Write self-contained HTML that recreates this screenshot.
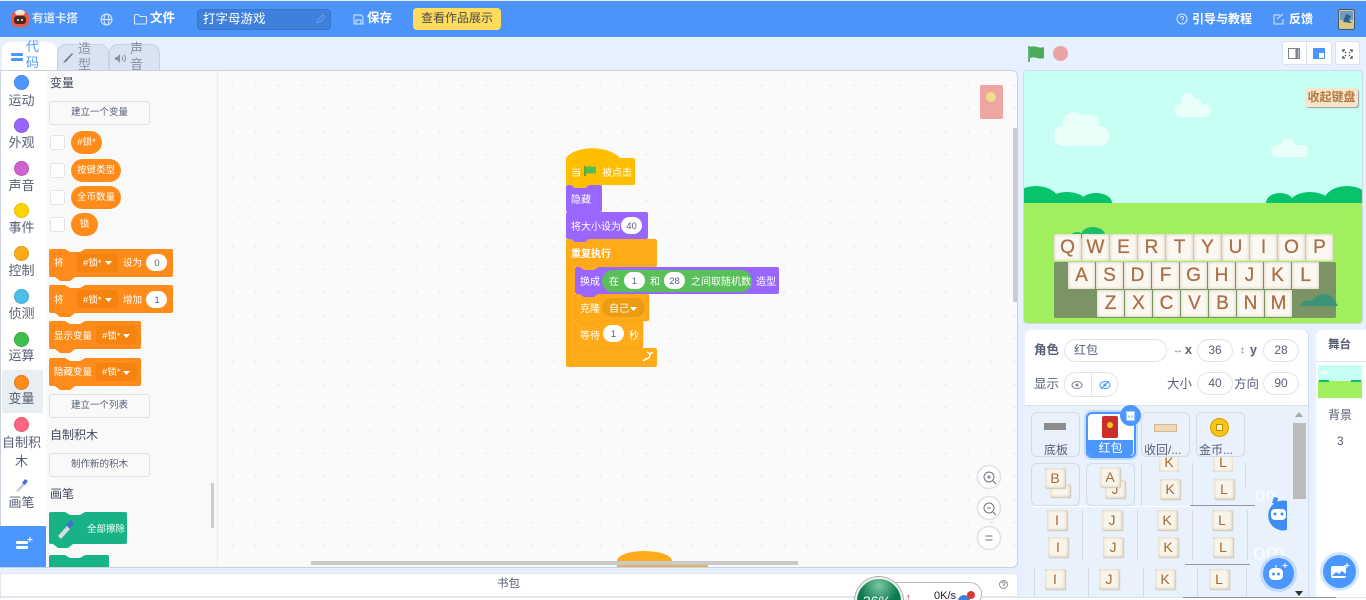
<!DOCTYPE html>
<html><head><meta charset="utf-8">
<style>
html,body{margin:0;padding:0;width:1366px;height:600px;overflow:hidden;background:#e6f0ff;font-family:"Liberation Sans","Noto Sans CJK SC",sans-serif;color:#575e75}
#w{position:relative;width:1366px;height:600px;overflow:hidden;background:#e6f0ff}
.a{position:absolute}
.t{position:absolute;white-space:nowrap;line-height:1}
.c{position:absolute;width:15px;height:15px;box-sizing:border-box;border-radius:50%;border:.5px solid rgba(0,0,0,.12)}
.l{position:absolute;left:0;width:43px;text-align:center;font-size:13px;line-height:16px;color:#575e75}
.btn{position:absolute;left:49px;width:99px;height:22px;border:1px solid #dde1e6;border-radius:3px;background:#f9f9f9;text-align:center;font-size:9.500px;line-height:22px;color:#575e75}
.h{position:absolute;left:50px;font-size:12px;color:#454b5c;line-height:14px}
.cb{position:absolute;left:50px;width:13px;height:13px;background:#fff;border:1px solid #e0e3e8;border-radius:3px}
.pill{position:absolute;left:71px;height:23px;border-radius:12px;background:#ff8c1a;color:#fff;font-size:9.500px;line-height:23px;text-align:center}
.f{position:absolute;height:21px;border:1px solid #dfe3ea;border-radius:12px;background:#fff;text-align:center;font-size:12px;line-height:21px;color:#575e75}
.tile{position:absolute;width:47px;height:43px;border:1px solid #d3dbe8;border-radius:6px;background:#e9f1fc}
.key{position:absolute;width:27px;height:27px;background:#fbf8f1;box-shadow:inset 0 0 3px #cfc2a8;text-align:center;font-size:19px;line-height:27px;color:#a9704a;-webkit-text-stroke:.3px #a9704a}
.k2{position:absolute;width:20px;height:20px;background:#f9f5ea;box-shadow:inset 0 0 3px #cfc2a8,1px 1px 1px #cfc6b2;text-align:center;font-size:14px;line-height:20px;color:#a46a3a}
</style></head><body><div id="w">

<!-- top bar -->
<div class="a" style="left:0;top:1px;width:1366px;height:36px;background:#4c94f9"></div>
<svg class="a" style="left:10px;top:9px" width="20" height="19"><path d="M6 3c-4 0-5 3-5 7s2 8 5 8h8c3 0 5-4 5-8s-1-7-5-7z" fill="#ef5a44"/><path d="M5 3c2-3 8-3 10 0l-1 3H6z" fill="#fbe3d8"/><rect x="4" y="7" width="12" height="8" rx="3" fill="#4c2620"/><circle cx="8" cy="11" r="1" fill="#fff"/><circle cx="12" cy="11" r="1" fill="#fff"/></svg>
<div class="t" style="left:32px;top:14px;font-size:11.500px;color:#dceaff;font-weight:bold">有道卡搭</div>
<svg class="a" style="left:100px;top:13px" width="13" height="13" fill="none" stroke="#d8e8ff"><circle cx="6.500" cy="6.500" r="5.500"/><ellipse cx="6.500" cy="6.500" rx="2.500" ry="5.500"/><path d="M1 6.500h11"/></svg>
<svg class="a" style="left:134px;top:13px" width="13" height="12" fill="none" stroke="#d8e8ff"><path d="M.5 2.500a1 1 0 0 1 1-1h3l1.500 2h5.500a1 1 0 0 1 1 1v5.500a1 1 0 0 1-1 1h-10a1 1 0 0 1-1-1z"/></svg>
<div class="t" style="left:150px;top:12px;font-size:12.500px;color:#fff;font-weight:bold">文件</div>
<div class="a" style="left:197px;top:9px;width:132px;height:19px;background:#3f80dc;border:1px solid #3775cf;border-radius:4px"></div>
<div class="t" style="left:203px;top:13px;font-size:12.500px;color:#fff">打字母游戏</div>
<svg class="a" style="left:315px;top:13px" width="12" height="12" fill="none" stroke="#6b9fe8"><path d="M2 10l1-3 5-5 2 2-5 5z"/></svg>
<svg class="a" style="left:353px;top:14px" width="11" height="11" fill="none" stroke="#d8e8ff"><path d="M1 1h7l2 2v7H1zM3 10V6h5v4"/></svg>
<div class="t" style="left:367px;top:12px;font-size:12.500px;color:#fff;font-weight:bold">保存</div>
<div class="a" style="left:413px;top:8px;width:88px;height:22px;background:#ffdc5c;border-radius:4px;text-align:center;font-size:12px;line-height:21px;color:#4a4a4a">查看作品展示</div>
<svg class="a" style="left:1176px;top:13px" width="12" height="12" fill="none" stroke="#d8e8ff"><circle cx="6" cy="6" r="5"/><path d="M4.500 5a1.500 1.500 0 1 1 2 1.400L6 7.500M6 9v.5"/></svg>
<div class="t" style="left:1192px;top:13px;font-size:12px;color:#fff;font-weight:bold">引导与教程</div>
<svg class="a" style="left:1273px;top:13px" width="12" height="12" fill="none" stroke="#d8e8ff"><path d="M10 6v5H1V2h6M4 6l6-5"/></svg>
<div class="t" style="left:1289px;top:13px;font-size:12px;color:#fff;font-weight:bold">反馈</div>
<svg class="a" style="left:1338px;top:9px" width="17" height="21"><rect x=".5" y=".5" width="16" height="20" rx="2" fill="#d8c98a" stroke="#4a5560"/><path d="M2 2h13v9H2z" fill="#6f9cc0"/><path d="M5 13l3-8 5 2-2 4 3 3z" fill="#2f5f8a"/></svg>

<!-- tabs -->
<div class="a" style="left:109px;top:44px;width:51px;height:27px;background:#d9e3f2;border:1px solid #c9d2e0;border-bottom:0;border-radius:9px 9px 0 0;box-sizing:border-box"></div>
<div class="a" style="left:57px;top:44px;width:52px;height:27px;background:#d9e3f2;border:1px solid #c9d2e0;border-bottom:0;border-radius:9px 9px 0 0;box-sizing:border-box"></div>
<div class="a" style="left:2px;top:42px;width:55px;height:30px;background:#fff;border-radius:9px 9px 0 0"></div>
<div class="t" style="left:26px;top:39px;width:13px;font-size:13px;line-height:16px;white-space:normal;color:#4c97ff;height:32px;overflow:hidden">代码</div>
<div class="t" style="left:78px;top:41px;width:13px;font-size:13px;line-height:16px;white-space:normal;color:#8a909e;height:30px;overflow:hidden">造型</div>
<div class="t" style="left:130px;top:41px;width:13px;font-size:13px;line-height:16px;white-space:normal;color:#8a909e;height:30px;overflow:hidden">声音</div>
<svg class="a" style="left:11px;top:52px" width="12" height="10"><rect y="1" width="12" height="3" rx="1" fill="#4c97ff"/><rect y="6" width="12" height="3" rx="1" fill="#4c97ff"/></svg>
<svg class="a" style="left:62px;top:52px" width="13" height="12"><path d="M1 11l3-1 7-8-1-1-7 7z" fill="#777f8c"/></svg>
<svg class="a" style="left:115px;top:54px" width="12" height="9"><path d="M0 3h2l3-3v9L2 6H0z" fill="#8a909e"/><path d="M7 2.500c1 1 1 3 0 4M9 1c2 2 2 5 0 7" stroke="#8a909e" fill="none"/></svg>

<!-- workspace -->
<div class="a" style="left:0;top:70px;width:1018px;height:498px;box-sizing:border-box;background:#f9f9f9;border:1px solid #c9d0de;border-radius:0 6px 6px 0"></div>
<div class="a" style="left:217px;top:71px;width:800px;height:496px;background-color:#fafafa;background-image:radial-gradient(circle,#ececec 1px,transparent 1.300px);background-size:23px 23px;background-position:3px 3px;border-left:1px solid #ececec;box-sizing:border-box;border-radius:0 6px 6px 0"></div>

<!-- categories -->
<div class="a" style="left:1px;top:71px;width:45px;height:455px;background:#fff"></div>
<div class="a" style="left:2px;top:370px;width:41px;height:43px;background:#e9eef2"></div>
<div class="c" style="left:14px;top:75px;background:#4c97ff"></div><div class="l" style="top:93px">运动</div>
<div class="c" style="left:14px;top:118px;background:#9966ff"></div><div class="l" style="top:135px">外观</div>
<div class="c" style="left:14px;top:161px;background:#cf63cf"></div><div class="l" style="top:178px">声音</div>
<div class="c" style="left:14px;top:203px;background:#ffd500"></div><div class="l" style="top:220px">事件</div>
<div class="c" style="left:14px;top:246px;background:#ffab19"></div><div class="l" style="top:263px">控制</div>
<div class="c" style="left:14px;top:289px;background:#4cbfe6"></div><div class="l" style="top:306px">侦测</div>
<div class="c" style="left:14px;top:332px;background:#40bf4a"></div><div class="l" style="top:348px">运算</div>
<div class="c" style="left:14px;top:375px;background:#ff8c1a"></div><div class="l" style="top:391px">变量</div>
<div class="c" style="left:14px;top:417px;background:#ff6680"></div>
<div class="l" style="top:433px;line-height:19px">自制积木</div>
<svg class="a" style="left:14px;top:477px" width="15" height="16"><path d="M2 14l7-8 2 2-7 7z" fill="#c7cbd6"/><path d="M8 6l3-4 3 2-3 4z" fill="#4c6fc9"/></svg>
<div class="l" style="top:495px">画笔</div>
<div class="a" style="left:0;top:526px;width:46px;height:41px;background:#4c97ff"></div>
<svg class="a" style="left:15px;top:536px" width="18" height="16"><rect x="1" y="5" width="12" height="3" rx="1" fill="#fff"/><rect x="1" y="10" width="12" height="3" rx="1" fill="#fff"/><path d="M15 1v5M12.500 3.500h5" stroke="#fff"/></svg>

<div class="h" style="top:76px">变量</div>
<div class="btn" style="top:101px">建立一个变量</div>
<div class="cb" style="top:135px"></div><div class="pill" style="top:131px;width:31px">#锁*</div>
<div class="cb" style="top:163px"></div><div class="pill" style="top:159px;width:50px">按键类型</div>
<div class="cb" style="top:190px"></div><div class="pill" style="top:186px;width:50px">全币数量</div>
<div class="cb" style="top:217px"></div><div class="pill" style="top:213px;width:27px">锁</div>
<div class="btn" style="top:394px">建立一个列表</div>
<div class="h" style="top:428px">自制积木</div>
<div class="btn" style="top:453px">制作新的积木</div>
<div class="h" style="top:487px">画笔</div>
<div class="a" style="left:211px;top:483px;width:3px;height:45px;background:#ccc"></div>

<svg class="a" style="left:0;top:0" width="218" height="568" font-size="9.500" font-family="Liberation Sans,Noto Sans CJK SC,sans-serif">
<g fill="#ff8c1a">
<path d="M51 249h14l5 3h10l5-3h86a2 2 0 0 1 2 2v24a2 2 0 0 1-2 2h-96l-5 4h-10l-5-4h-4a2 2 0 0 1-2-2v-24a2 2 0 0 1 2-2z"/>
<path d="M51 285h14l5 3h10l5-3h86a2 2 0 0 1 2 2v24a2 2 0 0 1-2 2h-96l-5 4h-10l-5-4h-4a2 2 0 0 1-2-2v-24a2 2 0 0 1 2-2z"/>
<path d="M51 321h14l5 3h10l5-3h54a2 2 0 0 1 2 2v24a2 2 0 0 1-2 2h-64l-5 4h-10l-5-4h-4a2 2 0 0 1-2-2v-24a2 2 0 0 1 2-2z"/>
<path d="M51 358h14l5 3h10l5-3h54a2 2 0 0 1 2 2v24a2 2 0 0 1-2 2h-64l-5 4h-10l-5-4h-4a2 2 0 0 1-2-2v-24a2 2 0 0 1 2-2z"/>
</g>
<g fill="#f5830e"><rect x="77" y="254" width="41" height="18" rx="3"/><rect x="77" y="290" width="41" height="18" rx="3"/><rect x="96" y="326" width="41" height="18" rx="3"/><rect x="96" y="363" width="41" height="18" rx="3"/></g>
<rect x="146" y="254" width="21" height="17" rx="8.500" fill="#fff"/><rect x="146" y="291" width="21" height="17" rx="8.500" fill="#fff"/>
<g fill="#fff">
<text x="54" y="266">将</text><text x="83" y="266">#锁*</text><path d="M105 261h7l-3.500 4z"/><text x="123" y="266">设为</text>
<text x="54" y="303">将</text><text x="83" y="303">#锁*</text><path d="M105 298h7l-3.500 4z"/><text x="123" y="303">增加</text>
<text x="54" y="339">显示变量</text><text x="102" y="339">#锁*</text><path d="M123 334h7l-3.500 4z"/>
<text x="54" y="375">隐藏变量</text><text x="102" y="375">#锁*</text><path d="M123 371h7l-3.500 4z"/>
</g>
<g fill="#575e75" text-anchor="middle"><text x="157" y="266">0</text><text x="157" y="303">1</text></g>
<path d="M51 512h14l5 3h10l5-3h40a2 2 0 0 1 2 2v28a2 2 0 0 1-2 2h-52l-5 4h-10l-5-4h-2a2 2 0 0 1-2-2v-28a2 2 0 0 1 2-2z" fill="#17b386"/>
<path d="M58 536l9-10 3 3-9 10z" fill="#d8dce4"/><path d="M66 525l5-5 3 3-4 6z" fill="#4c6fc9"/>
<text x="87" y="532" fill="#fff">全部擦除</text>
<path d="M51 555h14l5 3h10l5-3h22a2 2 0 0 1 2 2v10h-60v-10a2 2 0 0 1 2-2z" fill="#17b386"/>
</svg>

<!-- script -->
<svg class="a" style="left:555px;top:140px" width="240" height="240" font-size="10" font-family="Liberation Sans,Noto Sans CJK SC,sans-serif">
<path d="M13 99h3l4 3h10l4-3h66a2 2 0 0 1 2 2v24a2 2 0 0 1-2 2h-57l-4 3h-10l-4-3h-5v81h80a2 2 0 0 1 2 2v15a2 2 0 0 1-2 2h-87a2 2 0 0 1-2-2v-124a2 2 0 0 1 2-2z" fill="#ffab19"/>
<path d="M13 72h3l4 3h10l4-3h57a2 2 0 0 1 2 2v23a2 2 0 0 1-2 2h-57l-4 3h-10l-4-3h-3a2 2 0 0 1-2-2v-23a2 2 0 0 1 2-2z" fill="#9966ff"/>
<path d="M13 45h3l4 3h10l4-3h11a2 2 0 0 1 2 2v23a2 2 0 0 1-2 2h-11l-4 3h-10l-4-3h-3a2 2 0 0 1-2-2v-23a2 2 0 0 1 2-2z" fill="#9966ff"/>
<path d="M11 18c10-13 42-13 54 0h13a2 2 0 0 1 2 2v23a2 2 0 0 1-2 2h-44l-4 3h-10l-4-3h-5z" fill="#ffbf00"/>
<path d="M22 181h3l4 3h10l4-3h43a2 2 0 0 1 2 2v23a2 2 0 0 1-2 2h-43l-4 3h-10l-4-3h-3a2 2 0 0 1-2-2v-23a2 2 0 0 1 2-2z" fill="#ffab19" stroke="#f09c0c" stroke-width=".5"/>
<path d="M22 154h3l4 3h10l4-3h49a2 2 0 0 1 2 2v23a2 2 0 0 1-2 2h-49l-4 3h-10l-4-3h-3a2 2 0 0 1-2-2v-23a2 2 0 0 1 2-2z" fill="#ffab19" stroke="#f09c0c" stroke-width=".5"/>
<path d="M22 127h3l4 3h10l4-3h179a2 2 0 0 1 2 2v23a2 2 0 0 1-2 2h-179l-4 3h-10l-4-3h-3a2 2 0 0 1-2-2v-23a2 2 0 0 1 2-2z" fill="#9966ff"/>
<rect x="47" y="130" width="150" height="22" rx="11" fill="#59c059"/>
<rect x="47" y="158" width="43" height="19" rx="9.500" fill="#ec9c13"/>
<g fill="#fff"><rect x="66" y="77" width="21" height="17" rx="8.500"/><rect x="69" y="132" width="21" height="17" rx="8.500"/><rect x="109" y="132" width="21" height="17" rx="8.500"/><rect x="48" y="185" width="21" height="17" rx="8.500"/></g>
<g fill="#fff">
<text x="16" y="36">当</text><text x="47" y="36">被点击</text>
<text x="16" y="63">隐藏</text>
<text x="16" y="90">将大小设为</text>
<text x="16" y="117" font-weight="bold">重复执行</text>
<text x="25" y="145">换成</text><text x="54" y="145">在</text><text x="95" y="145">和</text><text x="136" y="145">之间取随机数</text><text x="201" y="145">造型</text>
<text x="25" y="172">克隆</text><text x="54" y="172">自己</text><path d="M75 167h7l-3.500 4z"/>
<text x="25" y="199">等待</text><text x="74" y="199">秒</text>
</g>
<g fill="#575e75" text-anchor="middle" font-size="9.500"><text x="76.500" y="89">40</text><text x="79.500" y="144">1</text><text x="119.500" y="144">28</text><text x="58.500" y="197">1</text></g>
<path d="M30 26v10" stroke="#3a9b47" stroke-width="1.500"/><path d="M31 27c4-2 6 1 10-1v7c-4 2-6-1-10 1z" fill="#4cbf56"/>
<path d="M90 219c3 0 5-1 5-5M92 212l3 2 3-2M88 221l3-2" stroke="#fff" stroke-width="1.500" fill="none"/>
</svg>

<!-- workspace widgets -->
<div class="a" style="left:980px;top:85px;width:23px;height:34px;background:#eda6a2;border-radius:2px"></div>
<div class="a" style="left:986px;top:92px;width:10px;height:10px;background:#f1dc8a;border-radius:50%"></div>
<div class="a" style="left:1013px;top:128px;width:4px;height:174px;background:#ccc"></div>
<div class="a" style="left:617px;top:551px;width:55px;height:10px;background:#ffab19;border-radius:50% 50% 0 0/100% 100% 0 0"></div>
<div class="a" style="left:311px;top:561px;width:487px;height:4px;background:#c9c9c9"></div>
<div class="a" style="left:617px;top:565px;width:91px;height:2px;background:#e4b25a"></div>
<svg class="a" style="left:976px;top:464px" width="27" height="88" fill="#fff" stroke="#e1e1e1" stroke-width="1.500">
<circle cx="13" cy="13" r="11.500"/><circle cx="13" cy="44" r="11.500"/><circle cx="13" cy="74" r="11.500"/>
<g fill="none" stroke="#6c7280" stroke-width="1"><circle cx="13" cy="13" r="5"/><path d="M17 17l3 3M11 13h4M13 11v4"/><circle cx="13" cy="44" r="5"/><path d="M17 48l3 3M11 44h4"/><path d="M9.500 72h7M9.500 76h7"/></g>
</svg>

<!-- backpack -->
<div class="a" style="left:0;top:573px;width:1018px;height:24px;background:#fff;border:1px solid #e3e6ec;box-sizing:border-box;border-radius:0 4px 0 0"></div>
<div class="t" style="left:497px;top:579px;font-size:11.500px;color:#575e75">书包</div>
<svg class="a" style="left:998px;top:579px" width="11" height="11" fill="none" stroke="#8a8f99"><circle cx="5.500" cy="5.500" r="4"/><path d="M4 4.500a1.500 1.500 0 1 1 1.500 1.500v1"/></svg>

<!-- sprite panel -->
<div class="a" style="left:1025px;top:330px;width:283px;height:267px;background:#e9f1fc;border-radius:6px 6px 0 0;border-right:1px solid #d3deef"></div>
<div class="a" style="left:1025px;top:330px;width:283px;height:75px;background:#fff;border-bottom:1px solid #d9e0ea;border-radius:6px 6px 0 0"></div>
<div class="t" style="left:1034px;top:344px;font-size:12.500px;font-weight:bold">角色</div>
<div class="f" style="left:1064px;top:339px;width:101px;text-align:left;text-indent:9px">红包</div>
<div class="t" style="left:1173px;top:346px;font-size:10px;color:#777">↔</div>
<div class="t" style="left:1185px;top:344px;font-size:12.500px;font-weight:bold">x</div>
<div class="f" style="left:1197px;top:339px;width:34px">36</div>
<div class="t" style="left:1240px;top:346px;font-size:10px;color:#777">↕</div>
<div class="t" style="left:1250px;top:344px;font-size:12.500px;font-weight:bold">y</div>
<div class="f" style="left:1263px;top:339px;width:34px">28</div>
<div class="t" style="left:1034px;top:378px;font-size:12.500px">显示</div>
<div class="a" style="left:1064px;top:372px;width:52px;height:23px;border:1px solid #dfe3ea;border-radius:12px;background:#fff"></div>
<div class="a" style="left:1091px;top:373px;width:1px;height:23px;background:#dfe3ea"></div>
<svg class="a" style="left:1071px;top:379px" width="42" height="12" fill="none"><ellipse cx="6" cy="6" rx="5" ry="3.500" stroke="#7c8290"/><circle cx="6" cy="6" r="1.500" fill="#7c8290"/><ellipse cx="34" cy="6" rx="5" ry="3.500" stroke="#4c97ff"/><circle cx="34" cy="6" r="1.500" fill="#4c97ff"/><path d="M30 10l8-8" stroke="#4c97ff"/></svg>
<div class="t" style="left:1167px;top:378px;font-size:12.500px">大小</div>
<div class="f" style="left:1197px;top:372px;width:34px">40</div>
<div class="t" style="left:1234px;top:378px;font-size:12.500px">方向</div>
<div class="f" style="left:1263px;top:372px;width:34px">90</div>

<!-- glitched tile rows -->
<div class="a" style="left:1031px;top:463px;width:49px;height:43px;border:1px solid #d3dbe8;border-radius:6px;box-sizing:border-box"></div>
<div class="a" style="left:1086px;top:463px;width:49px;height:43px;border:1px solid #d3dbe8;border-radius:6px;box-sizing:border-box"></div>
<div class="a" style="left:1141px;top:463px;width:1px;height:43px;background:#d3dbe8"></div>
<div class="a" style="left:1192px;top:463px;width:1px;height:43px;background:#d3dbe8"></div>
<div class="a" style="left:1245px;top:463px;width:1px;height:25px;background:#d3dbe8"></div>
<div class="a" style="left:1031px;top:506px;width:160px;height:1px;background:#fff"></div>
<div class="a" style="left:1190px;top:505px;width:65px;height:1px;background:#8f97a6"></div>
<div class="a" style="left:1185px;top:564px;width:65px;height:1px;background:#8f97a6"></div>
<div class="a" style="left:1082px;top:510px;width:1px;height:50px;background:#d3dbe8"></div>
<div class="a" style="left:1137px;top:510px;width:1px;height:50px;background:#d3dbe8"></div>
<div class="a" style="left:1192px;top:510px;width:1px;height:50px;background:#d3dbe8"></div>
<div class="a" style="left:1247px;top:510px;width:1px;height:50px;background:#d3dbe8"></div>
<div class="a" style="left:1034px;top:568px;width:1px;height:29px;background:#d3dbe8"></div>
<div class="a" style="left:1088px;top:568px;width:1px;height:29px;background:#d3dbe8"></div>
<div class="a" style="left:1143px;top:568px;width:1px;height:29px;background:#d3dbe8"></div>
<div class="a" style="left:1197px;top:568px;width:1px;height:29px;background:#d3dbe8"></div>
<div class="a" style="left:1246px;top:568px;width:1px;height:29px;background:#d3dbe8"></div>
<div class="k2" style="left:1159px;top:452px;clip-path:inset(5px 0 0 0)">K</div><div class="k2" style="left:1213px;top:452px;clip-path:inset(5px 0 0 0)">L</div>
<div class="k2" style="left:1050px;top:484px;height:13px"></div>
<div class="k2" style="left:1045px;top:468px">B</div>
<div class="k2" style="left:1105px;top:480px;height:18px;padding-top:0;line-height:18px">J</div>
<div class="k2" style="left:1100px;top:467px">A</div>
<div class="k2" style="left:1160px;top:479px">K</div><div class="k2" style="left:1214px;top:479px">L</div>
<div class="k2" style="left:1047px;top:510px">I</div><div class="k2" style="left:1102px;top:510px">J</div><div class="k2" style="left:1157px;top:510px">K</div><div class="k2" style="left:1212px;top:510px">L</div>
<div class="k2" style="left:1048px;top:537px">I</div><div class="k2" style="left:1103px;top:537px">J</div><div class="k2" style="left:1158px;top:537px">K</div><div class="k2" style="left:1213px;top:537px">L</div>
<div class="k2" style="left:1045px;top:569px">I</div><div class="k2" style="left:1099px;top:569px">J</div><div class="k2" style="left:1155px;top:569px">K</div><div class="k2" style="left:1209px;top:569px">L</div>

<!-- sprite tiles -->
<div class="tile" style="left:1031px;top:412px"></div>
<div class="a" style="left:1044px;top:423px;width:22px;height:7px;background:#8c8c8c"></div>
<div class="t" style="left:1044px;top:444px;font-size:12px">底板</div>
<div class="tile" style="left:1141px;top:412px"></div>
<div class="a" style="left:1154px;top:424px;width:21px;height:6px;background:#ecd9b8;border:1px solid #d8b78e"></div>
<div class="t" style="left:1144px;top:444px;font-size:12px">收回/...</div>
<div class="tile" style="left:1196px;top:412px"></div>
<div class="a" style="left:1210px;top:418px;width:19px;height:19px;background:#f5c518;border-radius:50%;box-shadow:inset 0 0 0 1px #d99f00"></div>
<div class="a" style="left:1216px;top:424px;width:7px;height:7px;background:#fff4c2;border:1px solid #c48a00;box-sizing:border-box"></div>
<div class="t" style="left:1199px;top:444px;font-size:12px">金币...</div>
<div class="tile" style="left:1086px;top:412px;border:2px solid #4c97ff;width:46px;height:42px;background:#fff;box-shadow:0 0 0 2px rgba(76,151,255,.25)"></div>
<div class="a" style="left:1102px;top:416px;width:16px;height:22px;background:#c9302c;border-radius:2px"></div>
<div class="a" style="left:1107px;top:422px;width:6px;height:6px;background:#f5c518;border-radius:50%"></div>
<div class="a" style="left:1088px;top:440px;width:45px;height:16px;background:#4c97ff;border-radius:0 0 4px 4px;overflow:hidden;color:#fff;text-align:center;font-size:12px;line-height:17px">红包</div>
<div class="a" style="left:1120px;top:405px;width:21px;height:21px;background:#4c97ff;border-radius:50%"></div>
<svg class="a" style="left:1125px;top:410px" width="11" height="11"><path d="M1 2h9M2 3h7v7H2z" stroke="#fff" fill="#fff"/><path d="M4 5.500v2M7 5.500v2" stroke="#4c97ff"/></svg>

<!-- scrollbar -->
<div class="a" style="left:1293px;top:423px;width:13px;height:76px;background:#bcbcbc"></div>
<svg class="a" style="left:1294px;top:411px" width="11" height="8"><path d="M1 6h8L5 1z" fill="#a8a8a8"/></svg>
<svg class="a" style="left:1294px;top:590px" width="11" height="7"><path d="M1 1h8L5 6z" fill="#333"/></svg>

<!-- robots -->
<div class="t" style="left:1255px;top:486px;font-size:19px;color:#f8fbff">on</div>
<div class="t" style="left:1253px;top:541px;font-size:23px;color:#f8fbff">om</div>
<svg class="a" style="left:1262px;top:495px" width="27" height="37"><path d="M25 6a15 15 0 1 0 0 29z" fill="#3f8cf5"/><path d="M10 8l2-6 4 1-1 6z" fill="#3f8cf5"/><rect x="9" y="14" width="15" height="11" rx="4" fill="#fff"/><circle cx="13" cy="19" r="1.500" fill="#3f8cf5"/><circle cx="20" cy="19" r="1.500" fill="#3f8cf5"/></svg>
<div class="a" style="left:1263px;top:558px;width:31px;height:31px;background:#4c97ff;border-radius:50%;box-shadow:0 0 0 3px rgba(76,151,255,.25)"></div>
<svg class="a" style="left:1267px;top:561px" width="24" height="24"><rect x="2" y="7" width="14" height="12" rx="4.500" fill="#fff"/><circle cx="6.500" cy="13" r="1.500" fill="#4c97ff"/><circle cx="11.500" cy="13" r="1.500" fill="#4c97ff"/><path d="M9 7V4M18 2v5M15.500 4.500h5" stroke="#fff"/></svg>

<!-- stage header -->
<svg class="a" style="left:1028px;top:45px" width="18" height="18"><path d="M1 1v16" stroke="#3a9b47" stroke-width="1.500"/><path d="M2 2c5-2 9 2 14 0v11c-5 2-9-2-14 0z" fill="#4cab5a"/></svg>
<div class="a" style="left:1053px;top:46px;width:15px;height:15px;border-radius:50%;background:#eba2a4"></div>
<div class="a" style="left:1282px;top:41px;width:50px;height:24px;background:#fff;border:1px solid #dbe2ec;border-radius:3px;box-sizing:border-box"></div>
<div class="a" style="left:1306px;top:41px;width:1px;height:24px;background:#dbe2ec"></div>
<div class="a" style="left:1335px;top:41px;width:25px;height:24px;background:#fff;border:1px solid #dbe2ec;border-radius:3px;box-sizing:border-box"></div>
<svg class="a" style="left:1288px;top:48px" width="12" height="11" fill="none" stroke="#7c8290"><rect x=".5" y=".5" width="11" height="10"/><rect x="7.500" y="1" width="3" height="9" fill="#7c8290" stroke="none"/></svg>
<svg class="a" style="left:1313px;top:48px" width="12" height="11"><rect x=".5" y=".5" width="11" height="10" fill="#fff" stroke="#4c97ff"/><rect x="1" y="1" width="5" height="9" fill="#4c97ff"/><rect x="6" y="1" width="5" height="4" fill="#4c97ff"/></svg>
<svg class="a" style="left:1342px;top:49px" width="11" height="10" stroke="#555e6b" stroke-width="1.500" fill="none"><path d="M1 3V1h2M8 1h2v2M1 7v2h2M8 9h2V7M3 3l1 1M8 3L7 4M3 7l1-1M8 7L7 6"/></svg>

<!-- stage -->
<div class="a" style="left:1024px;top:71px;width:338px;height:252px;overflow:hidden;border-radius:3px;background:#c8fff5;box-shadow:0 0 0 1px #d0dbe6">
 <svg class="a" style="left:0;top:0" width="338" height="252">
  <g fill="#e9fff9"><circle cx="50" cy="52" r="11"/><circle cx="65" cy="53" r="10"/><rect x="30" y="55" width="55" height="20" rx="9"/>
  <circle cx="164" cy="29" r="7"/><circle cx="172" cy="34" r="6"/><rect x="151" y="33" width="36" height="13" rx="6"/>
  <circle cx="264" cy="73" r="6"/><rect x="247" y="74" width="37" height="12" rx="6"/></g>
  <g fill="#05c46b"><ellipse cx="12" cy="132" rx="24" ry="17"/><ellipse cx="43" cy="132" rx="20" ry="11"/><ellipse cx="72" cy="132" rx="16" ry="10"/><ellipse cx="256" cy="132" rx="14" ry="10"/><ellipse cx="286" cy="132" rx="20" ry="11"/><ellipse cx="323" cy="132" rx="24" ry="17"/></g>
  <rect y="132" width="338" height="120" fill="#a1ef5f"/>
  <ellipse cx="69" cy="164" rx="12" ry="8" fill="#1bbf6a"/><ellipse cx="53" cy="165" rx="6" ry="4" fill="#1bbf6a"/>
  <rect x="30" y="191" width="282" height="56" rx="2" fill="#7a9465"/>
  <path d="M276 235c2-6 8-6 12-5 3-6 15-10 21-3l5 8z" fill="#3c9378"/>
 </svg>
 <div class="key" style="left:30px;top:163px">Q</div><div class="key" style="left:58px;top:163px">W</div><div class="key" style="left:86px;top:163px">E</div><div class="key" style="left:114px;top:163px">R</div><div class="key" style="left:142px;top:163px">T</div><div class="key" style="left:170px;top:163px">Y</div><div class="key" style="left:198px;top:163px">U</div><div class="key" style="left:226px;top:163px">I</div><div class="key" style="left:254px;top:163px">O</div><div class="key" style="left:282px;top:163px">P</div>
 <div class="key" style="left:44px;top:191px">A</div><div class="key" style="left:72px;top:191px">S</div><div class="key" style="left:100px;top:191px">D</div><div class="key" style="left:128px;top:191px">F</div><div class="key" style="left:156px;top:191px">G</div><div class="key" style="left:184px;top:191px">H</div><div class="key" style="left:212px;top:191px">J</div><div class="key" style="left:240px;top:191px">K</div><div class="key" style="left:268px;top:191px">L</div>
 <div class="key" style="left:73px;top:219px">Z</div><div class="key" style="left:101px;top:219px">X</div><div class="key" style="left:129px;top:219px">C</div><div class="key" style="left:157px;top:219px">V</div><div class="key" style="left:185px;top:219px">B</div><div class="key" style="left:213px;top:219px">N</div><div class="key" style="left:241px;top:219px">M</div>
 <div class="a" style="left:281px;top:17px;width:53px;height:19px;background:#f8e6cc;border-radius:3px;box-shadow:1px 1px 1px #999;text-align:center;font-size:12px;line-height:19px;font-weight:bold;color:#b07a47">收起键盘</div>
</div>

<!-- stage selector -->
<div class="a" style="left:1316px;top:330px;width:50px;height:267px;background:#fff;border-radius:6px 0 0 0"></div>
<div class="a" style="left:1316px;top:361px;width:50px;height:1px;background:#dfe5ee"></div>
<div class="t" style="left:1328px;top:340px;font-size:11.500px;font-weight:bold">舞台</div>
<svg class="a" style="left:1318px;top:365px" width="44" height="33"><rect width="44" height="33" rx="2" fill="#c8fff5"/><rect y="16" width="44" height="17" fill="#a1ef5f"/><path d="M1 16h10M33 16h10" stroke="#05c46b" stroke-width="2"/><ellipse cx="7" cy="8" rx="4" ry="2" fill="#e9fff9"/></svg>
<div class="t" style="left:1328px;top:409px;font-size:12px">背景</div>
<div class="t" style="left:1337px;top:435px;font-size:12px">3</div>
<div class="a" style="left:1323px;top:555px;width:33px;height:33px;background:#4c97ff;border-radius:50%;box-shadow:0 0 0 3px rgba(76,151,255,.25)"></div>
<svg class="a" style="left:1330px;top:562px" width="20" height="19"><rect x="1" y="4" width="15" height="12" rx="2" fill="#fff"/><path d="M2 14l4-4 3 2 3-3 4 3v2H2z" fill="#4c97ff"/><path d="M17 1v5M14.500 3.500h5" stroke="#fff"/></svg>

<!-- bottom strip and speed widget -->
<div class="a" style="left:0;top:597px;width:1366px;height:3px;background:#fff;border-top:1px solid #e0e3e8;box-sizing:border-box"></div>
<div class="a" style="left:1183px;top:597px;width:153px;height:1px;background:#8f97a6"></div>
<div class="a" style="left:880px;top:582px;width:102px;height:24px;background:#fff;border:1px solid #bdbdbd;border-radius:12px;box-sizing:border-box"></div>
<div class="a" style="left:855px;top:577px;width:48px;height:48px;box-sizing:border-box;border-radius:50%;background:radial-gradient(circle at 50% 15%,#7cc7a2,#0b7a50 45%);border:2px solid #eef0ee;box-shadow:0 0 0 1px #aaa"></div>
<div class="t" style="left:863px;top:594px;font-size:14px;color:#fff">36%</div>
<div class="t" style="left:905px;top:591px;font-size:13px;color:#e25a4a;font-weight:bold">↑</div>
<div class="t" style="left:934px;top:591px;font-size:11px;color:#222">0K/s</div>
<div class="a" style="left:958px;top:595px;width:12px;height:12px;border-radius:50%;background:#3c80d9"></div>
<div class="a" style="left:967px;top:591px;width:8px;height:8px;border-radius:50%;background:#d93636"></div>
</div></body></html>
